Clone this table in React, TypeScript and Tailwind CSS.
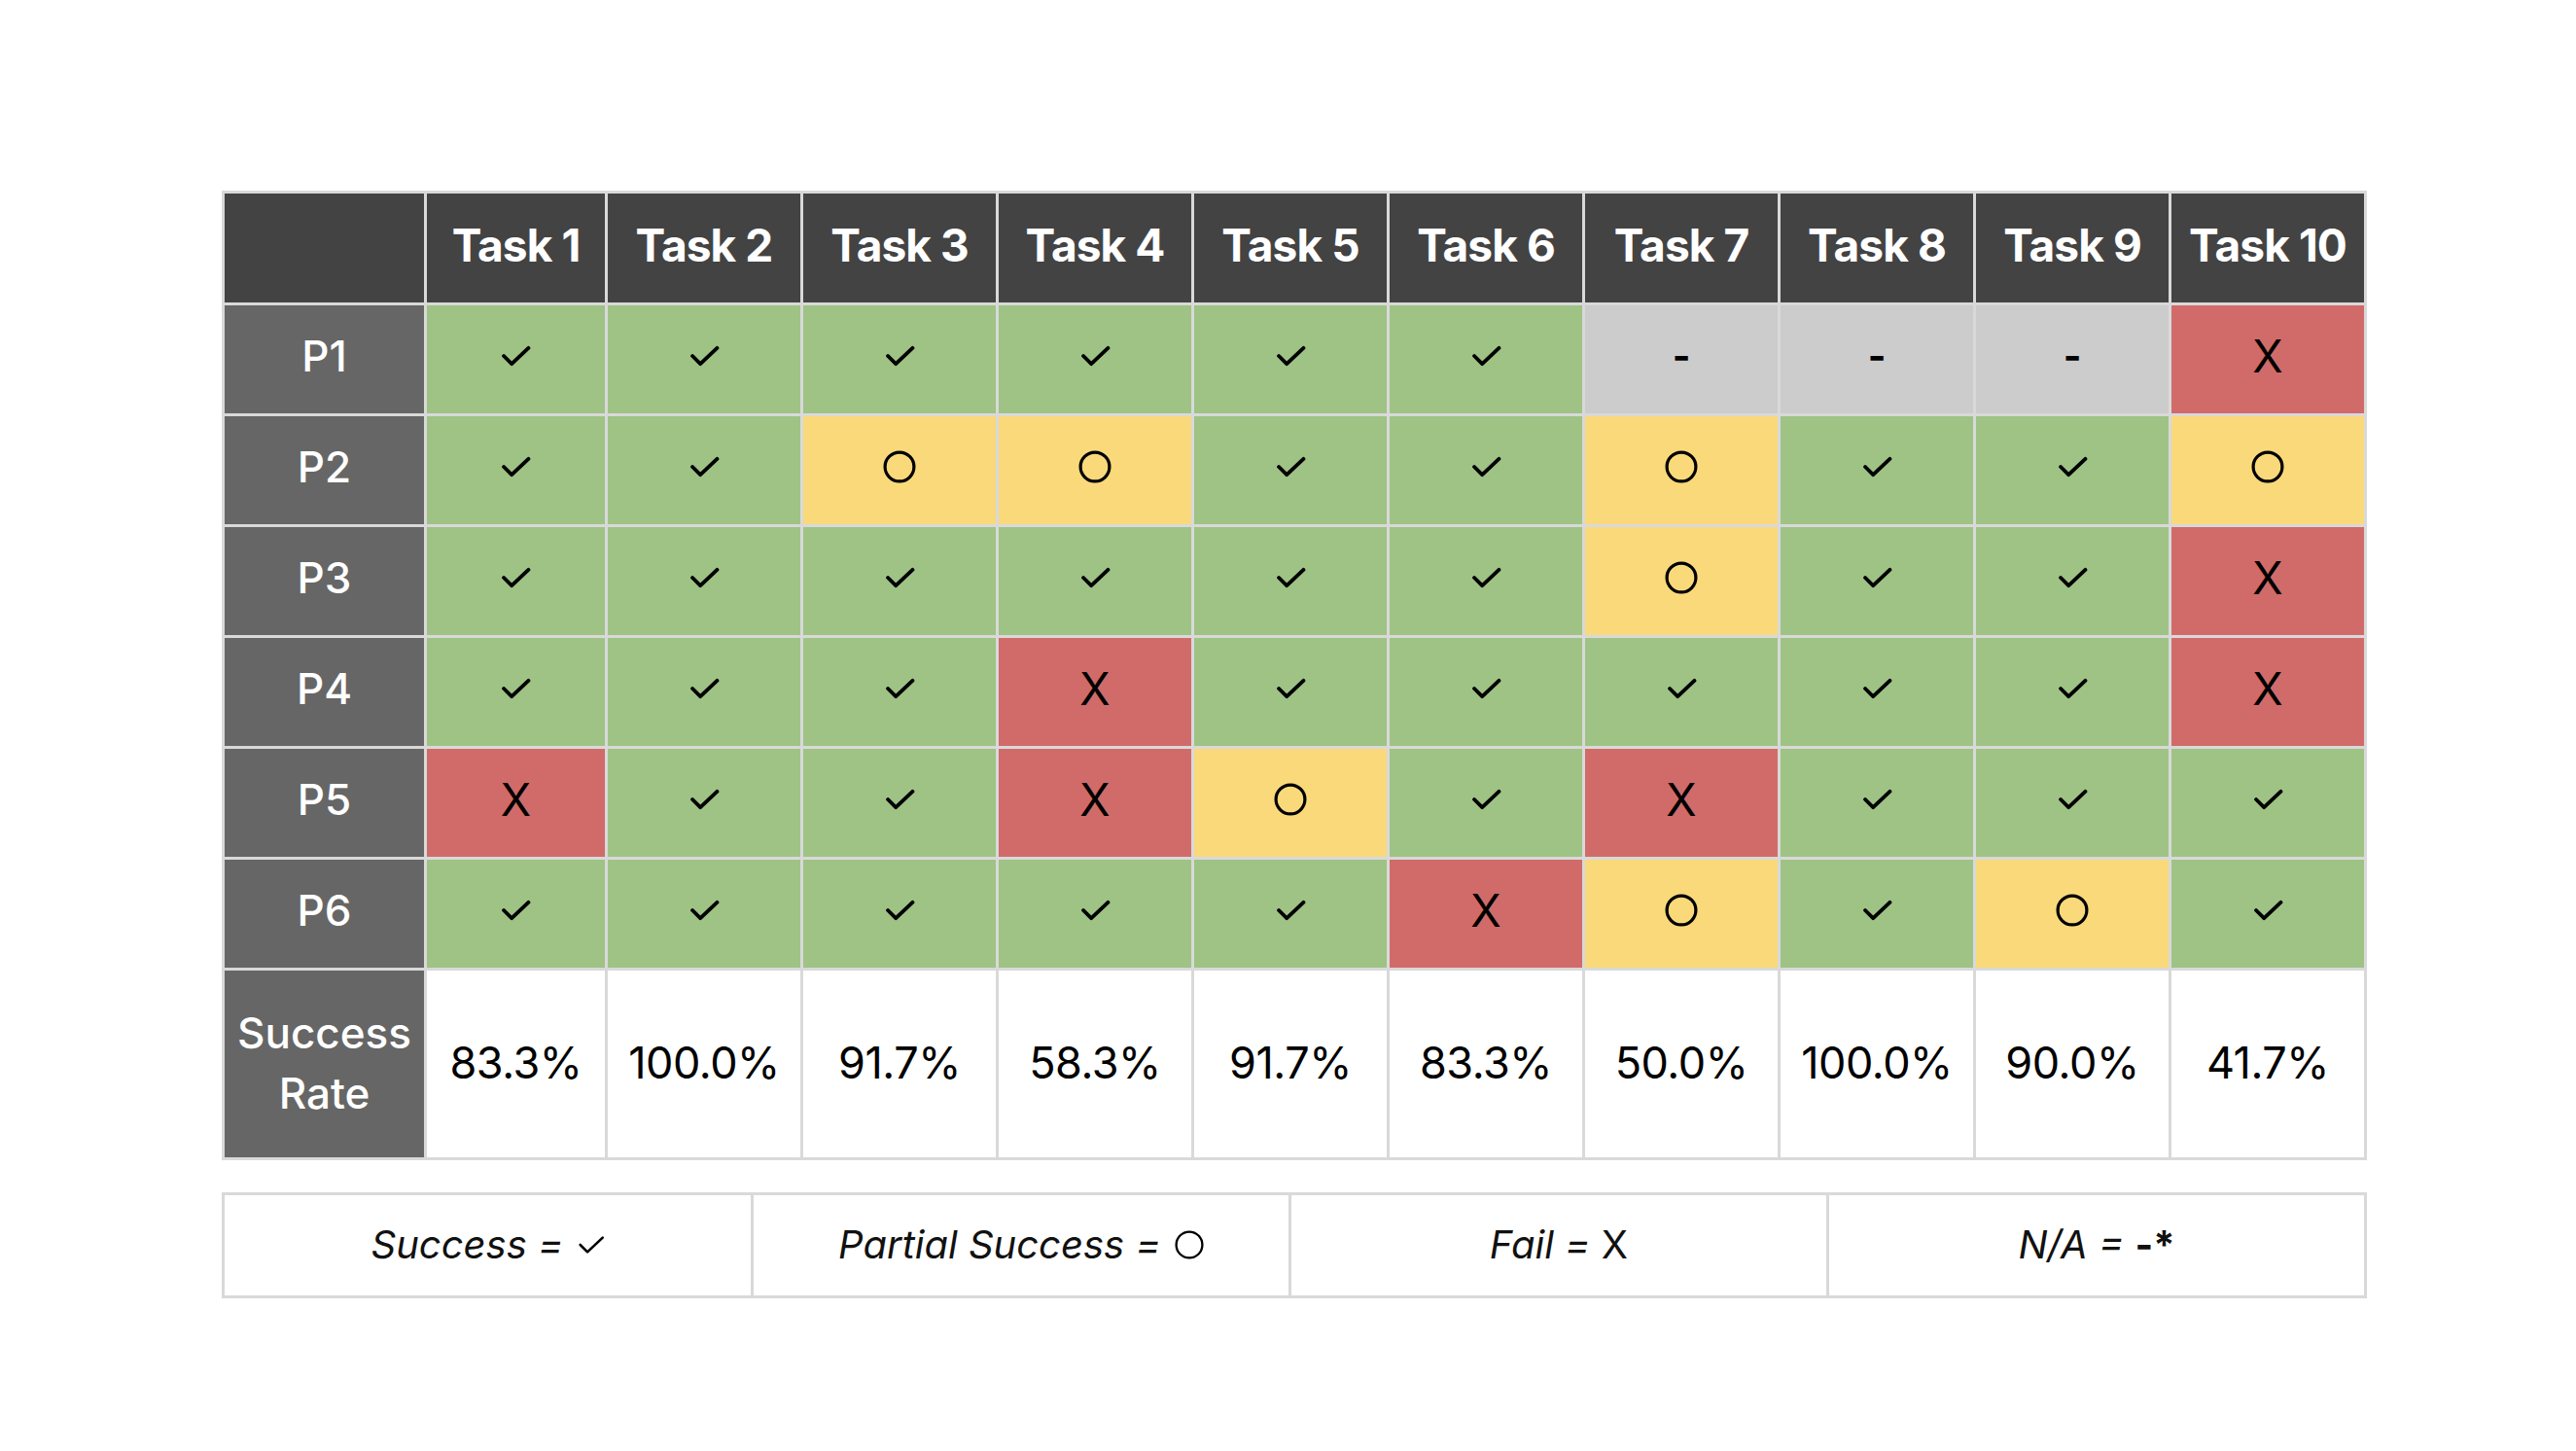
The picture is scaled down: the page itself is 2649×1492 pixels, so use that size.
import React from "react";

type V = "s" | "p" | "f" | "n";

const data: V[][] = [
  ["s", "s", "s", "s", "s", "s", "n", "n", "n", "f"],
  ["s", "s", "p", "p", "s", "s", "p", "s", "s", "p"],
  ["s", "s", "s", "s", "s", "s", "p", "s", "s", "f"],
  ["s", "s", "s", "f", "s", "s", "s", "s", "s", "f"],
  ["f", "s", "s", "f", "p", "s", "f", "s", "s", "s"],
  ["s", "s", "s", "s", "s", "f", "p", "s", "p", "s"],
];

const rates = ["83.3%", "100.0%", "91.7%", "58.3%", "91.7%", "83.3%", "50.0%", "100.0%", "90.0%", "41.7%"];

const bg: Record<V, string> = {
  s: "bg-[#9ec385]",
  p: "bg-[#fad97a]",
  f: "bg-[#d16b69]",
  n: "bg-[#cccccc]",
};

function Check({ w = 31, h = 22, sw = 4 }: { w?: number; h?: number; sw?: number }) {
  return (
    <svg width={w} height={h} viewBox="0 0 32 23" fill="none">
      <path d="M3 11.5 L11.5 20 L29.5 3" stroke="#000" strokeWidth={sw} strokeLinecap="round" strokeLinejoin="round" />
    </svg>
  );
}

function Circle({ d = 34, sw = 3.2 }: { d?: number; sw?: number }) {
  return (
    <svg width={d} height={d} viewBox="0 0 34 34" fill="none">
      <circle cx="17" cy="17" r={17 - sw / 2 - 0.5} stroke="#000" strokeWidth={sw} />
    </svg>
  );
}

function Mark({ v }: { v: V }) {
  if (v === "s") return <Check />;
  if (v === "p") return <Circle />;
  if (v === "f") return <span className="text-[46px] leading-none text-black">X</span>;
  return <span className="text-[40px] font-bold leading-none text-black">-</span>;
}

export default function App() {
  const font = { fontFamily: "Inter, 'Liberation Sans', sans-serif" };
  return (
    <div className="min-h-[1492px] w-[2649px] bg-white pt-[196px] pl-[228px]" style={font}>
      <div className="grid w-[2206px] grid-cols-[205px_183px_repeat(9,1fr)] grid-rows-[112px_repeat(6,111px)_192px] gap-[3px] bg-[#d9d9d9] p-[3px]">
        <div className="bg-[#434343]" />
        {Array.from({ length: 10 }, (_, i) => (
          <div key={i} className="flex items-center justify-center bg-[#434343] pb-[6px] text-[46px] font-bold tracking-[-0.02em] text-white">
            Task {i + 1}
          </div>
        ))}
        {data.map((row, r) => (
          <React.Fragment key={r}>
            <div className="flex items-center justify-center bg-[#666666] pb-[8px] text-[44px] font-medium text-white">P{r + 1}</div>
            {row.map((v, c) => (
              <div key={c} className={`flex items-center justify-center pb-[8px] ${bg[v]}`}>
                <Mark v={v} />
              </div>
            ))}
          </React.Fragment>
        ))}
        <div className="flex flex-col items-center justify-center bg-[#666666] pb-[2px] text-[44px] font-medium leading-[62px] text-white">
          <span>Success</span>
          <span>Rate</span>
        </div>
        {rates.map((r, i) => (
          <div key={i} className="flex items-center justify-center bg-white pb-[3px] text-[45px] tracking-[-0.01em] text-black">
            {r}
          </div>
        ))}
      </div>

      <div className="mt-[33px] grid h-[109px] w-[2206px] grid-cols-[541px_1fr_1fr_1fr] gap-[3px] bg-[#d9d9d9] p-[3px]">
        <div className="flex items-center justify-center gap-[14px] bg-white pb-[2px] text-[40px] italic text-[#111]">
          <span>Success =</span>
          <Check w={28} h={20} sw={3} />
        </div>
        <div className="flex items-center justify-center gap-[14px] bg-white pb-[2px] text-[40px] italic text-[#111]">
          <span>Partial Success =</span>
          <Circle d={30} sw={2.6} />
        </div>
        <div className="flex items-center justify-center bg-white pb-[2px] text-[40px] text-[#111]">
          <span className="italic">Fail =&nbsp;</span>
          <span>X</span>
        </div>
        <div className="flex items-center justify-center bg-white pb-[2px] text-[40px] text-[#111]">
          <span className="italic">N/A =&nbsp;</span>
          <span className="font-bold">-*</span>
        </div>
      </div>
    </div>
  );
}
